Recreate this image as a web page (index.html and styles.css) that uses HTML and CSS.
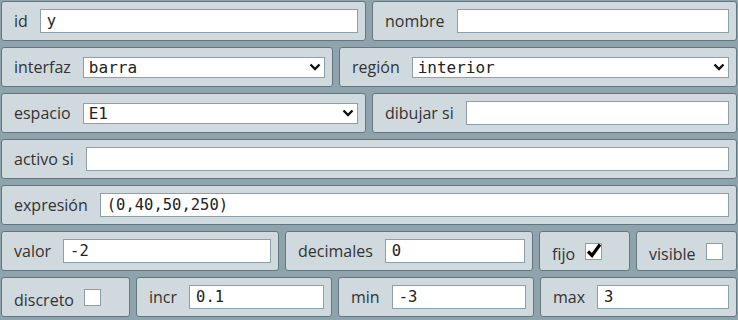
FILE: index.html
```html
<!DOCTYPE html>
<html lang="es">
<head>
  <meta charset="UTF-8">
  <meta name="viewport" content="width=device-width, initial-scale=1.0">
  <title>Control</title>
  <link rel="stylesheet" href="styles.css">
</head>
<body>
  <div class="form">
    <div class="row">
      <div class="field">
        <label>id</label>
        <input type="text" value="y">
      </div>
      <div class="field">
        <label>nombre</label>
        <input type="text" value="">
      </div>
    </div>

    <div class="row">
      <div class="field w-interfaz">
        <label>interfaz</label>
        <span class="select">
          <select><option>barra</option></select>
          <svg class="chevron" width="12" height="8" viewBox="0 0 12 8"><polyline points="1.5,1.5 6,6 10.5,1.5" fill="none" stroke="#111" stroke-width="2.4"/></svg>
        </span>
      </div>
      <div class="field">
        <label>región</label>
        <span class="select">
          <select><option>interior</option></select>
          <svg class="chevron" width="12" height="8" viewBox="0 0 12 8"><polyline points="1.5,1.5 6,6 10.5,1.5" fill="none" stroke="#111" stroke-width="2.4"/></svg>
        </span>
      </div>
    </div>

    <div class="row">
      <div class="field">
        <label>espacio</label>
        <span class="select">
          <select><option>E1</option></select>
          <svg class="chevron" width="12" height="8" viewBox="0 0 12 8"><polyline points="1.5,1.5 6,6 10.5,1.5" fill="none" stroke="#111" stroke-width="2.4"/></svg>
        </span>
      </div>
      <div class="field">
        <label>dibujar si</label>
        <input type="text" value="">
      </div>
    </div>

    <div class="row">
      <div class="field">
        <label>activo si</label>
        <input type="text" value="">
      </div>
    </div>

    <div class="row">
      <div class="field">
        <label>expresión</label>
        <input type="text" value="(0,40,50,250)">
      </div>
    </div>

    <div class="row">
      <div class="field w-valor">
        <label>valor</label>
        <input type="text" value="-2">
      </div>
      <div class="field w-decimales">
        <label>decimales</label>
        <input type="text" value="0">
      </div>
      <div class="field check w-fijo">
        <label>fijo</label>
        <span class="box">
          <svg width="17" height="17" viewBox="0 0 17 17">
            <polyline points="3,8.5 7,12.5 15,1.5" fill="none" stroke="#000" stroke-width="3.2"/>
          </svg>
        </span>
      </div>
      <div class="field check">
        <label>visible</label>
        <span class="box"></span>
      </div>
    </div>

    <div class="row">
      <div class="field check w-discreto">
        <label>discreto</label>
        <span class="box"></span>
      </div>
      <div class="field w-small">
        <label>incr</label>
        <input type="text" value="0.1">
      </div>
      <div class="field w-small">
        <label>min</label>
        <input type="text" value="-3">
      </div>
      <div class="field">
        <label>max</label>
        <input type="text" value="3">
      </div>
    </div>
  </div>
</body>
</html>
```

FILE: styles.css
```css
body {
  margin: 0;
  background: #8fa3ac;
  font-family: 'Open Sans', 'Noto Sans', sans-serif;
}
.form {
  padding: 1px;
  display: flex;
  flex-direction: column;
  gap: 6px;
}
.row {
  display: flex;
  gap: 6px;
}
.field {
  flex: 1;
  min-width: 0;
  height: 40px;
  box-sizing: border-box;
  display: flex;
  align-items: center;
  gap: 12px;
  padding: 0 7px 0 12px;
  background: #d0d9de;
  border: 1px solid #62767f;
  border-radius: 3px;
}
.field label {
  font-size: 16px;
  color: #333;
  white-space: nowrap;
}
.field input {
  flex: 1;
  width: 0;
  min-width: 0;
  height: 24px;
  box-sizing: border-box;
  border: 1px solid #8d9fa8;
  border-radius: 0;
  background: #fff;
  padding: 0 6px;
  font-family: 'DejaVu Sans Mono', monospace;
  font-size: 15.5px;
  color: #222;
  outline: none;
}
.select {
  flex: 1;
  min-width: 0;
  display: flex;
  position: relative;
}
.select select {
  flex: 1;
  width: 0;
  height: 21px;
  box-sizing: border-box;
  appearance: none;
  border: 1px solid #8d9fa8;
  border-radius: 0;
  background: #fff;
  padding: 0 20px 0 5px;
  font-family: 'DejaVu Sans Mono', monospace;
  font-size: 16px;
  color: #222;
}
.chevron {
  position: absolute;
  right: 4px;
  top: 6px;
  pointer-events: none;
}
.check {
  gap: 10px;
}
.check label {
  padding-top: 5px;
}
.box {
  width: 17px;
  height: 17px;
  box-sizing: border-box;
  border: 1px solid #8d9fa8;
  background: #fff;
  display: flex;
}
.box svg {
  margin: -1px;
}
.w-interfaz { flex: 0 0 332px; }
.w-valor { flex: 0 0 278px; }
.w-decimales { flex: 0 0 248px; }
.w-fijo { flex: 0 0 91px; }
.w-discreto { flex: 0 0 129px; }
.w-small { flex: 0 0 196px; }
```
